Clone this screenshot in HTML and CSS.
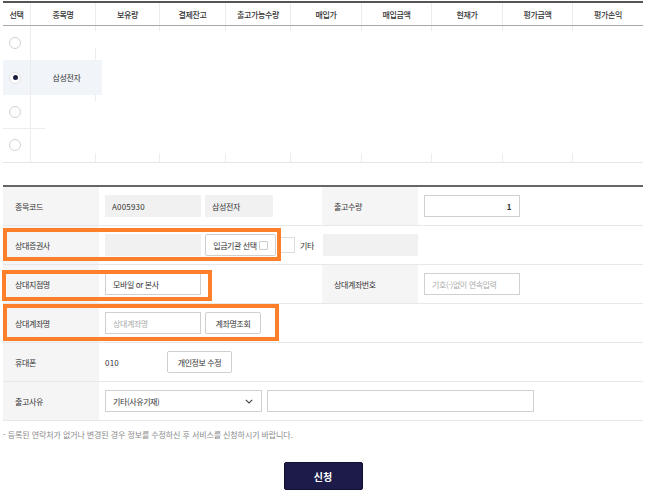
FILE: index.html
```html
<!DOCTYPE html>
<html lang="ko">
<head>
<meta charset="utf-8">
<title>출고신청</title>
<link rel="stylesheet" href="styles.css">
</head>
<body>
<div class="page">
  <div class="list">
    <div class="thead">
      <div class="th">선택</div>
      <div class="th">종목명</div>
      <div class="th">보유량</div>
      <div class="th">결제잔고</div>
      <div class="th">출고가능수량</div>
      <div class="th">매입가</div>
      <div class="th">매입금액</div>
      <div class="th">현재가</div>
      <div class="th">평가금액</div>
      <div class="th">평가손익</div>
    </div>
    <div class="tbody">
      <div class="rows">
        <div class="trow r1"><div class="rc"><span class="radio"></span></div><div class="nc"></div></div>
        <div class="trow r2 sel"><div class="rc"><span class="radio on"></span></div><div class="nc">삼성전자</div></div>
        <div class="trow r3"><div class="rc"><span class="radio"></span></div><div class="nc"></div></div>
        <div class="trow r4"><div class="rc"><span class="radio"></span></div><div class="nc"></div></div>
      </div>
      <div class="stub top c2"></div><div class="stub top c3"></div><div class="stub top c4"></div><div class="stub top c5"></div><div class="stub top c6"></div><div class="stub top c7"></div><div class="stub top c8"></div><div class="stub top c9"></div>
      <div class="stub bot c2"></div><div class="stub bot c3"></div><div class="stub bot c4"></div><div class="stub bot c5"></div><div class="stub bot c6"></div><div class="stub bot c7"></div><div class="stub bot c8"></div><div class="stub bot c9"></div>
    </div>
  </div>

  <div class="form">
    <div class="frow">
      <div class="lbl">종목코드</div>
      <div class="val"><span class="box ro w96 num">A005930</span><span class="box ro w68">삼성전자</span></div>
      <div class="lbl">출고수량</div>
      <div class="val"><span class="box inp w96 right">1</span></div>
    </div>
    <div class="frow">
      <div class="lbl">상대증권사</div>
      <div class="val"><span class="box ro w96"></span><span class="btn w71">입금기관 선택<i class="chk"></i></span><span class="cbox"></span><span class="etc">기타</span></div>
      <div class="val tight"><span class="box ro w96"></span></div>
      <div class="val"></div>
    </div>
    <div class="frow">
      <div class="lbl">상대지점명</div>
      <div class="val"><span class="box inp w96">모바일 or 본사</span></div>
      <div class="lbl">상대계좌번호</div>
      <div class="val"><span class="box inp w96 ph">기호(-)없이 연속입력</span></div>
    </div>
    <div class="frow">
      <div class="lbl">상대계좌명</div>
      <div class="val"><span class="box inp w96 ph">상대계좌명</span><span class="btn w56">계좌명조회</span></div>
      <div class="val"></div>
      <div class="val"></div>
    </div>
    <div class="frow">
      <div class="lbl">휴대폰</div>
      <div class="val wide"><span class="phone num">010</span><span class="btn w65">개인정보 수정</span></div>
    </div>
    <div class="frow">
      <div class="lbl">출고사유</div>
      <div class="val wide"><span class="box inp w157 select">기타(사유기재)<svg class="chev" width="8" height="5" viewBox="0 0 8 5"><polyline points="0.8,0.8 4,4 7.2,0.8" fill="none" stroke="#444" stroke-width="1.1"/></svg></span><span class="box inp w267"></span></div>
    </div>

    <div class="mark m1"></div>
    <div class="mark m2"></div>
    <div class="mark m3"></div>
  </div>

  <p class="note">- 등록된 연락처가 없거나 변경된 경우 정보를 수정하신 후 서비스를 신청하시기 바랍니다.</p>

  <div class="actions"><button class="submit">신청</button></div>
</div>
</body>
</html>
```
FILE: styles.css
```css
* { box-sizing: border-box; }
html, body { margin: 0; padding: 0; background: #fff; }
body {
  font-family: "Noto Sans CJK KR", "Noto Sans", sans-serif;
  font-size: 8px;
  letter-spacing: -0.4px;
  color: #333;
}
.page { width: 640px; margin-left: 3px; padding-top: 1px; }

/* list table */
.list { border-top: 2px solid #555; }
.thead {
  display: grid;
  grid-template-columns: 28px 65px 64px 66px 65px 71px 70px 71px 70px 70px;
  height: 23px;
  border-bottom: 1px solid #a9a9a9;
}
.th {
  display: flex; align-items: center; justify-content: center;
  border-right: 1px solid #ececec;
  color: #333; font-weight: 500;
}
.th:last-child { border-right: none; }
.tbody {
  display: grid;
  grid-template-columns: 28px 65px 64px 66px 65px 71px 70px 71px 70px 70px;
  grid-template-rows: 5px 1fr 9px;
  height: 137px;
  border-bottom: 1px solid #e6e6e6;
}
.rows {
  grid-column: 1 / 4; grid-row: 1 / 4;
  background:
    linear-gradient(#ececec, #ececec) 92px 22px / 1px 53px no-repeat,
    linear-gradient(#ececec, #ececec) 0 102px / 42px 1px no-repeat;
}
.trow { display: flex; width: 99px; }
.r1 { height: 34px; }
.r2 { height: 35px; }
.r3 { height: 33px; }
.r4 { height: 34px; }
.trow.sel { background: #f1f4f9; }
.rc {
  width: 28px; border-right: 1px solid #ececec;
  display: flex; align-items: center; justify-content: flex-start; padding-left: 6px;
}
.nc { flex: 1; display: flex; align-items: center; justify-content: center; color: #333; }
.radio {
  width: 12px; height: 12px; border-radius: 50%;
  border: 1px solid #d2d2d2; background: #fff; display: block;
}
.radio.on { border-color: #e2e2e2; position: relative; }
.radio.on::after {
  content: ""; position: absolute; left: 2.5px; top: 2.5px;
  width: 5px; height: 5px; border-radius: 50%; background: #1c2040;
}
.stub { border-right: 1px solid #ececec; }
.stub.top { grid-row: 1; }
.stub.bot { grid-row: 3; }
.c2 { grid-column: 2; } .c3 { grid-column: 3; } .c4 { grid-column: 4; } .c5 { grid-column: 5; }
.c6 { grid-column: 6; } .c7 { grid-column: 7; } .c8 { grid-column: 8; } .c9 { grid-column: 9; }

/* form */
.form { position: relative; margin-top: 22px; border-top: 2px solid #666; }
.frow {
  display: grid;
  grid-template-columns: 96px 223px 96px 225px;
  height: 39px;
  border-bottom: 1px solid #e8e8e8;
}
.lbl {
  background: #f5f5f5; display: flex; align-items: center;
  padding-left: 12px; color: #333;
}
.val { display: flex; align-items: center; padding-left: 6px; gap: 4px; }
.val.tight { padding-left: 1px; }
.val.wide { grid-column: 2 / 5; }
.box {
  height: 22px; display: inline-flex; align-items: center; padding: 0 7px;
  color: #333;
}
.num { letter-spacing: 0.2px; }
.box.ro { background: #f1f1f1; }
.box.inp { background: #fff; border: 1px solid #d0d0d0; }
.box.right { justify-content: flex-end; padding-right: 8px; font-weight: 700; }
.box.ph { color: #aaa; }
.w96 { width: 96px; }
.w68 { width: 68px; }
.w157 { width: 157px; }
.w267 { width: 267px; margin-left: 1px; }
.select { justify-content: space-between; padding-right: 8px; }
.chev { display: block; }
.btn {
  height: 22px; display: inline-flex; align-items: center; justify-content: center;
  border: 1px solid #cfcfcf; border-radius: 2px; background: #fff; color: #333;
}
.w71 { width: 71px; }
.w56 { width: 56px; }
.w65 { width: 65px; }
.chk {
  display: inline-block; width: 9px; height: 9px; border: 1px solid #ccc;
  border-radius: 1px; margin-left: 2px; background: #fff;
}
.cbox {
  width: 14px; height: 16px; border: 1px solid #ddd; border-left: none;
  margin-left: 1px; background: #fff;
}
.etc { margin-left: 1px; }
.phone { width: 58px; }

.mark { position: absolute; border: 4px solid #fd7f2a; }
.m1 { left: 0; top: 41px; width: 278px; height: 33px; }
.m2 { left: -1px; top: 83px; width: 210px; height: 31px; }
.m3 { left: 0; top: 117px; width: 276px; height: 37px; }

.note { margin: 8px 0 0; color: #8a8a8a; font-size: 8px; letter-spacing: -0.1px; }

.actions { display: flex; justify-content: center; margin-top: 22px; }
.submit {
  width: 79px; height: 28px; background: #1c1b4a; border: 1px solid #101030;
  border-radius: 2px; color: #fff; font-family: inherit; font-size: 10px;
  font-weight: 700; letter-spacing: 0;
}
```
